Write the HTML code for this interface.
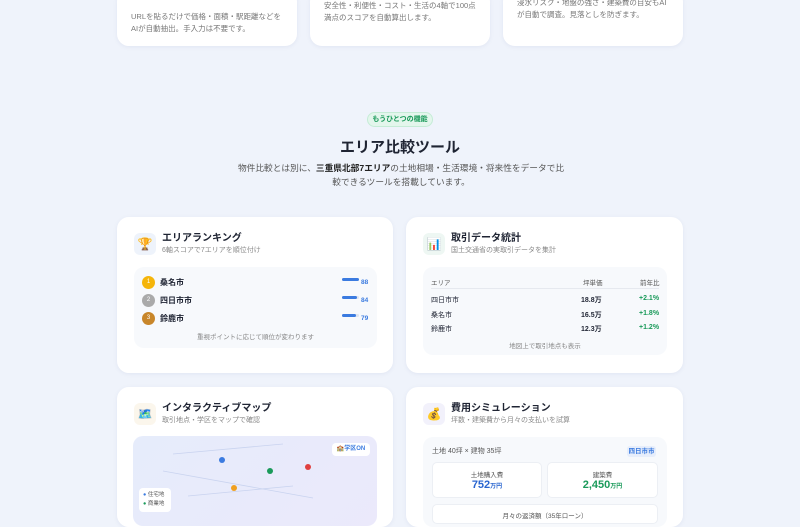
<!DOCTYPE html>
<html><head><meta charset="utf-8"><style>
*{margin:0;padding:0;box-sizing:border-box}
body{width:800px;height:514px;overflow:hidden;background:#eff3fb;font-family:"Liberation Sans","Noto Sans CJK JP",sans-serif;color:#1f2433;position:relative}
.a{position:absolute}
.card{position:absolute;background:#fff;border-radius:12px;box-shadow:0 1px 4px rgba(60,80,140,.08)}
.sm{font-size:7.5px;color:#777}
.ic{position:absolute;width:22px;height:22px;border-radius:6px;display:flex;align-items:center;justify-content:center;font-size:12px}
.t{position:absolute;font-size:10px;font-weight:bold;line-height:12px}
.s{position:absolute;font-size:7px;color:#888;line-height:9px}
.inner{position:absolute;background:#f7f9fc;border-radius:10px}
</style></head><body>
<div class="card" style="left:117px;top:-10px;width:180px;height:56px"></div>
<div class="card" style="left:310px;top:-10px;width:180px;height:56px"></div>
<div class="card" style="left:503px;top:-10px;width:180px;height:56px"></div>
<div class="a sm" style="left:131px;top:11px;line-height:12px;width:152px">URLを貼るだけで価格・面積・駅距離などをAIが自動抽出。手入力は不要です。</div>
<div class="a sm" style="left:324px;top:0px;line-height:12px;width:156px">安全性・利便性・コスト・生活の4軸で100点満点のスコアを自動算出します。</div>
<div class="a sm" style="left:517px;top:-3px;line-height:12px;width:152px">浸水リスク・地盤の強さ・建築費の目安もAIが自動で調査。見落としを防ぎます。</div>

<div class="a" style="left:367px;top:112px;width:66px;height:15px;border-radius:8px;background:#e3f6ec;border:1px solid #c5ecd6;color:#1a9a5a;font-size:7px;font-weight:bold;text-align:center;line-height:13px">もうひとつの機能</div>
<div class="a" style="left:0;width:800px;top:136px;text-align:center;font-size:15px;font-weight:bold">エリア比較ツール</div>
<div class="a" style="left:234px;width:334px;top:161px;text-align:center;font-size:8.7px;line-height:14px;color:#555">物件比較とは別に、<b style="color:#222">三重県北部7エリア</b>の土地相場・生活環境・将来性をデータで比較できるツールを搭載しています。</div>

<div class="card" style="left:117px;top:217px;width:276px;height:156px"></div>
<div class="ic" style="left:134px;top:233px;background:#eef3fb">🏆</div>
<div class="t" style="left:162px;top:233px">エリアランキング</div>
<div class="s" style="left:162px;top:246px">6軸スコアで7エリアを順位付け</div>
<div class="inner" style="left:134px;top:267px;width:243px;height:81px"></div>
<div class="a" style="left:142px;top:276px;width:13px;height:13px;border-radius:50%;background:#f5b50a;color:#fff;font-size:6px;text-align:center;line-height:13px">1</div>
<div class="a" style="left:142px;top:294px;width:13px;height:13px;border-radius:50%;background:#aaa;color:#fff;font-size:6px;text-align:center;line-height:13px">2</div>
<div class="a" style="left:142px;top:312px;width:13px;height:13px;border-radius:50%;background:#c8862a;color:#fff;font-size:6px;text-align:center;line-height:13px">3</div>
<div class="a" style="left:160px;top:277px;font-size:8px;font-weight:bold">桑名市</div>
<div class="a" style="left:160px;top:295px;font-size:8px;font-weight:bold">四日市市</div>
<div class="a" style="left:160px;top:313px;font-size:8px;font-weight:bold">鈴鹿市</div>
<div class="a" style="left:342px;top:278px;width:17px;height:3px;background:#3b7be0;border-radius:2px"></div>
<div class="a" style="left:342px;top:296px;width:17px;height:3px;background:#dde4ef;border-radius:2px"><div style="width:15px;height:3px;background:#3b7be0;border-radius:2px"></div></div>
<div class="a" style="left:342px;top:314px;width:17px;height:3px;background:#dde4ef;border-radius:2px"><div style="width:14px;height:3px;background:#3b7be0;border-radius:2px"></div></div>
<div class="a" style="left:361px;top:279px;font-size:6.5px;color:#3b7be0;font-weight:bold">88</div>
<div class="a" style="left:361px;top:297px;font-size:6.5px;color:#3b7be0;font-weight:bold">84</div>
<div class="a" style="left:361px;top:315px;font-size:6.5px;color:#3b7be0;font-weight:bold">79</div>
<div class="a" style="left:134px;width:243px;top:331px;text-align:center;font-size:6.5px;color:#888">重視ポイントに応じて順位が変わります</div>

<div class="card" style="left:406px;top:217px;width:277px;height:156px"></div>
<div class="ic" style="left:423px;top:233px;background:#eef7f3">📊</div>
<div class="t" style="left:451px;top:233px">取引データ統計</div>
<div class="s" style="left:451px;top:246px">国土交通省の実取引データを集計</div>
<div class="inner" style="left:423px;top:267px;width:244px;height:88px"></div>
<div class="a" style="left:431px;top:277px;font-size:6.5px;color:#555">エリア</div>
<div class="a" style="left:583px;top:277px;font-size:6.5px;color:#555">坪単価</div>
<div class="a" style="left:640px;top:277px;font-size:6.5px;color:#555">前年比</div>
<div class="a" style="left:431px;top:288px;width:228px;height:1px;background:#e6e9ef"></div>
<div class="a" style="left:431px;top:295px;font-size:7px">四日市市</div><div class="a" style="left:581px;top:295px;font-size:7px;font-weight:bold">18.8万</div><div class="a" style="left:639px;top:295px;font-size:7px;font-weight:bold;color:#1a9a5a">+2.1%</div>
<div class="a" style="left:431px;top:310px;font-size:7px">桑名市</div><div class="a" style="left:581px;top:310px;font-size:7px;font-weight:bold">16.5万</div><div class="a" style="left:639px;top:310px;font-size:7px;font-weight:bold;color:#1a9a5a">+1.8%</div>
<div class="a" style="left:431px;top:324px;font-size:7px">鈴鹿市</div><div class="a" style="left:581px;top:324px;font-size:7px;font-weight:bold">12.3万</div><div class="a" style="left:639px;top:324px;font-size:7px;font-weight:bold;color:#1a9a5a">+1.2%</div>
<div class="a" style="left:423px;width:244px;top:340px;text-align:center;font-size:6.5px;color:#888">地図上で取引地点も表示</div>

<div class="card" style="left:117px;top:387px;width:276px;height:140px"></div>
<div class="ic" style="left:134px;top:403px;background:#fbf6ec">🗺️</div>
<div class="t" style="left:162px;top:403px">インタラクティブマップ</div>
<div class="s" style="left:162px;top:416px">取引地点・学区をマップで確認</div>
<div class="a" style="left:133px;top:436px;width:244px;height:90px;border-radius:10px;background:linear-gradient(135deg,#e6ecfb,#ebe9fb)">
<svg width="244" height="90" class="a" style="left:0;top:0"><g stroke="#c9d3ef" stroke-width="0.8" fill="none"><path d="M40 18 L150 8"/><path d="M30 35 L180 62"/><path d="M55 60 L160 50"/></g>
<circle cx="89" cy="24" r="3" fill="#3b7be0"/><circle cx="137" cy="35" r="3" fill="#1a9a5a"/><circle cx="175" cy="31" r="3" fill="#e04040"/><circle cx="101" cy="52" r="3" fill="#f0a020"/></svg>
<div class="a" style="left:199px;top:7px;width:38px;height:13px;background:#fff;border-radius:4px;font-size:6px;color:#3b7be0;font-weight:bold;text-align:center;line-height:13px">🏫学区ON</div>
<div class="a" style="left:6px;top:52px;width:32px;height:24px;background:#fff;border-radius:4px;font-size:5.5px;line-height:9px;padding:3px 4px;color:#555"><span style="color:#3b7be0">●</span> 住宅地<br><span style="color:#1a9a5a">●</span> 商業地</div>
</div>

<div class="card" style="left:406px;top:387px;width:277px;height:140px"></div>
<div class="ic" style="left:423px;top:403px;background:#f2f1fb">💰</div>
<div class="t" style="left:451px;top:403px">費用シミュレーション</div>
<div class="s" style="left:451px;top:416px">坪数・建築費から月々の支払いを試算</div>
<div class="inner" style="left:423px;top:437px;width:244px;height:90px"></div>
<div class="a" style="left:432px;top:446px;font-size:7px;color:#555">土地 40坪 × 建物 35坪</div>
<div class="a" style="left:627px;top:446px;width:29px;height:11px;background:#e7eefb;border-radius:3px;font-size:6.5px;color:#3b7be0;font-weight:bold;text-align:center;line-height:11px">四日市市</div>
<div class="a" style="left:432px;top:462px;width:110px;height:36px;background:#fff;border:1px solid #eceff4;border-radius:5px;text-align:center"><div style="font-size:6.5px;color:#555;margin-top:6px">土地購入費</div><div style="font-size:11px;font-weight:bold;color:#2a66d0">752<span style="font-size:6px">万円</span></div></div>
<div class="a" style="left:547px;top:462px;width:111px;height:36px;background:#fff;border:1px solid #eceff4;border-radius:5px;text-align:center"><div style="font-size:6.5px;color:#555;margin-top:6px">建築費</div><div style="font-size:11px;font-weight:bold;color:#1a9a5a">2,450<span style="font-size:6px">万円</span></div></div>
<div class="a" style="left:432px;top:504px;width:226px;height:20px;background:#fff;border:1px solid #eceff4;border-radius:5px;text-align:center;font-size:6.5px;color:#555;padding-top:5px">月々の返済額（35年ローン）</div>
</body></html>
